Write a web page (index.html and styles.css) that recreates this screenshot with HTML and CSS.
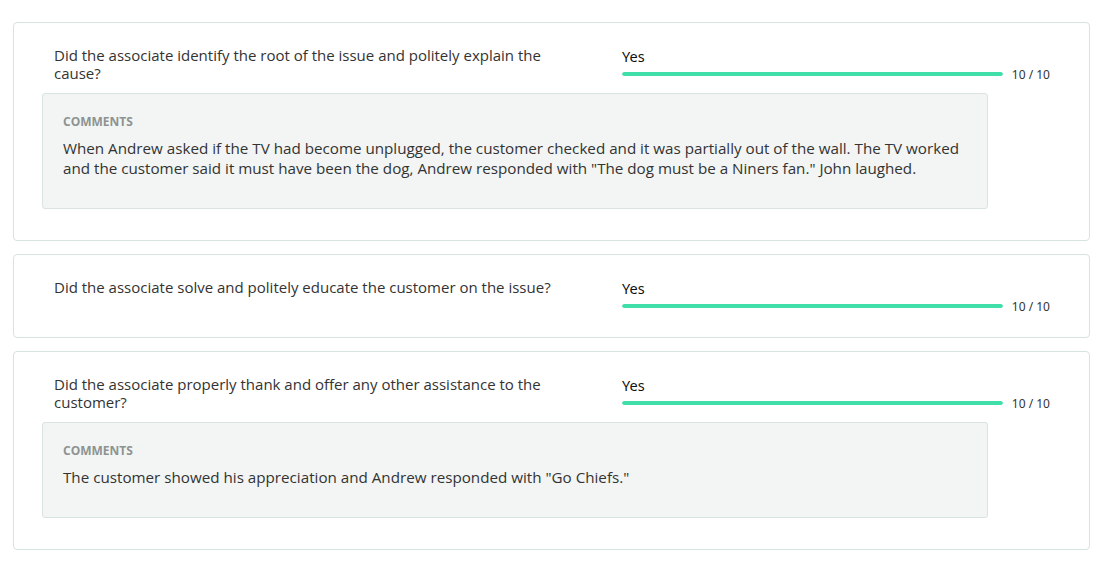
FILE: index.html
```html
<!DOCTYPE html>
<html lang="en">
<head>
  <meta charset="UTF-8" />
  <meta name="viewport" content="width=device-width, initial-scale=1.0"/>
  <title>Evaluation</title>
  <link rel="stylesheet" href="styles.css">
</head>
<body>

  <div class="list">

    <!-- Question 1 -->
    <div class="card">
      <div class="row">
        <div class="question">Did the associate identify the root of the issue and politely explain the cause?</div>
        <div class="answer">
          <div class="answer-label">Yes</div>
          <div class="score-row">
            <div class="bar"><div class="bar-fill" style="width: 100%"></div></div>
            <span class="score">10 / 10</span>
          </div>
        </div>
      </div>
      <div class="comments">
        <div class="comments-title">COMMENTS</div>
        <p class="comments-text">When Andrew asked if the TV had become unplugged, the customer checked and it was partially out of the wall. The TV worked and the customer said it must have been the dog, Andrew responded with "The dog must be a Niners fan." John laughed.</p>
      </div>
    </div>

    <!-- Question 2 -->
    <div class="card">
      <div class="row">
        <div class="question">Did the associate solve and politely educate the customer on the issue?</div>
        <div class="answer">
          <div class="answer-label">Yes</div>
          <div class="score-row">
            <div class="bar"><div class="bar-fill" style="width: 100%"></div></div>
            <span class="score">10 / 10</span>
          </div>
        </div>
      </div>
    </div>

    <!-- Question 3 -->
    <div class="card">
      <div class="row">
        <div class="question">Did the associate properly thank and offer any other assistance to the customer?</div>
        <div class="answer">
          <div class="answer-label">Yes</div>
          <div class="score-row">
            <div class="bar"><div class="bar-fill" style="width: 100%"></div></div>
            <span class="score">10 / 10</span>
          </div>
        </div>
      </div>
      <div class="comments">
        <div class="comments-title">COMMENTS</div>
        <p class="comments-text">The customer showed his appreciation and Andrew responded with "Go Chiefs."</p>
      </div>
    </div>

  </div>

</body>
</html>
```

FILE: styles.css
```css
body {
  margin: 0;
  font-family: "Open Sans", "Lato", sans-serif;
  background: #fff;
  color: #333;
}
.list {
  display: flex;
  flex-direction: column;
  gap: 13px;
  padding: 22px 21px 12px 13px;
}
.card {
  border: 1px solid #d6e3df;
  border-radius: 4px;
  padding: 24px 39px 24px 40px;
  background: #fff;
}
.row {
  display: flex;
  justify-content: space-between;
  align-items: flex-start;
}
.question {
  width: 520px;
  font-size: 15px;
  line-height: 17.5px;
  color: #333;
}
.answer {
  width: 428px;
}
.answer-label {
  font-family: "Noto Sans", sans-serif;
  font-size: 14.5px;
  line-height: 17px;
  margin-top: 1px;
  margin-bottom: 2px;
  color: #111;
}
.score-row {
  display: flex;
  align-items: center;
  height: 14px;
  gap: 9px;
}
.bar {
  flex: 1;
  height: 4px;
  border-radius: 2px;
  background: #e6ecea;
  overflow: hidden;
}
.bar-fill {
  height: 100%;
  background: #40dfa9;
  border-radius: 2px;
}
.score {
  font-family: "Noto Sans", sans-serif;
  font-size: 12px;
  color: #333;
}
.comments {
  margin: 11px 62px 7px -12px;
  padding: 20px 20px 30px 20px;
  background: #f2f5f4;
  border: 1px solid #d9e3e0;
  border-radius: 3px;
}
.comments-title {
  font-size: 12px;
  line-height: 16px;
  font-weight: bold;
  color: #8e9391;
}
.comments-text {
  margin: 8px 0 0;
  font-size: 15.2px;
  line-height: 20px;
  color: #333;
}
```
